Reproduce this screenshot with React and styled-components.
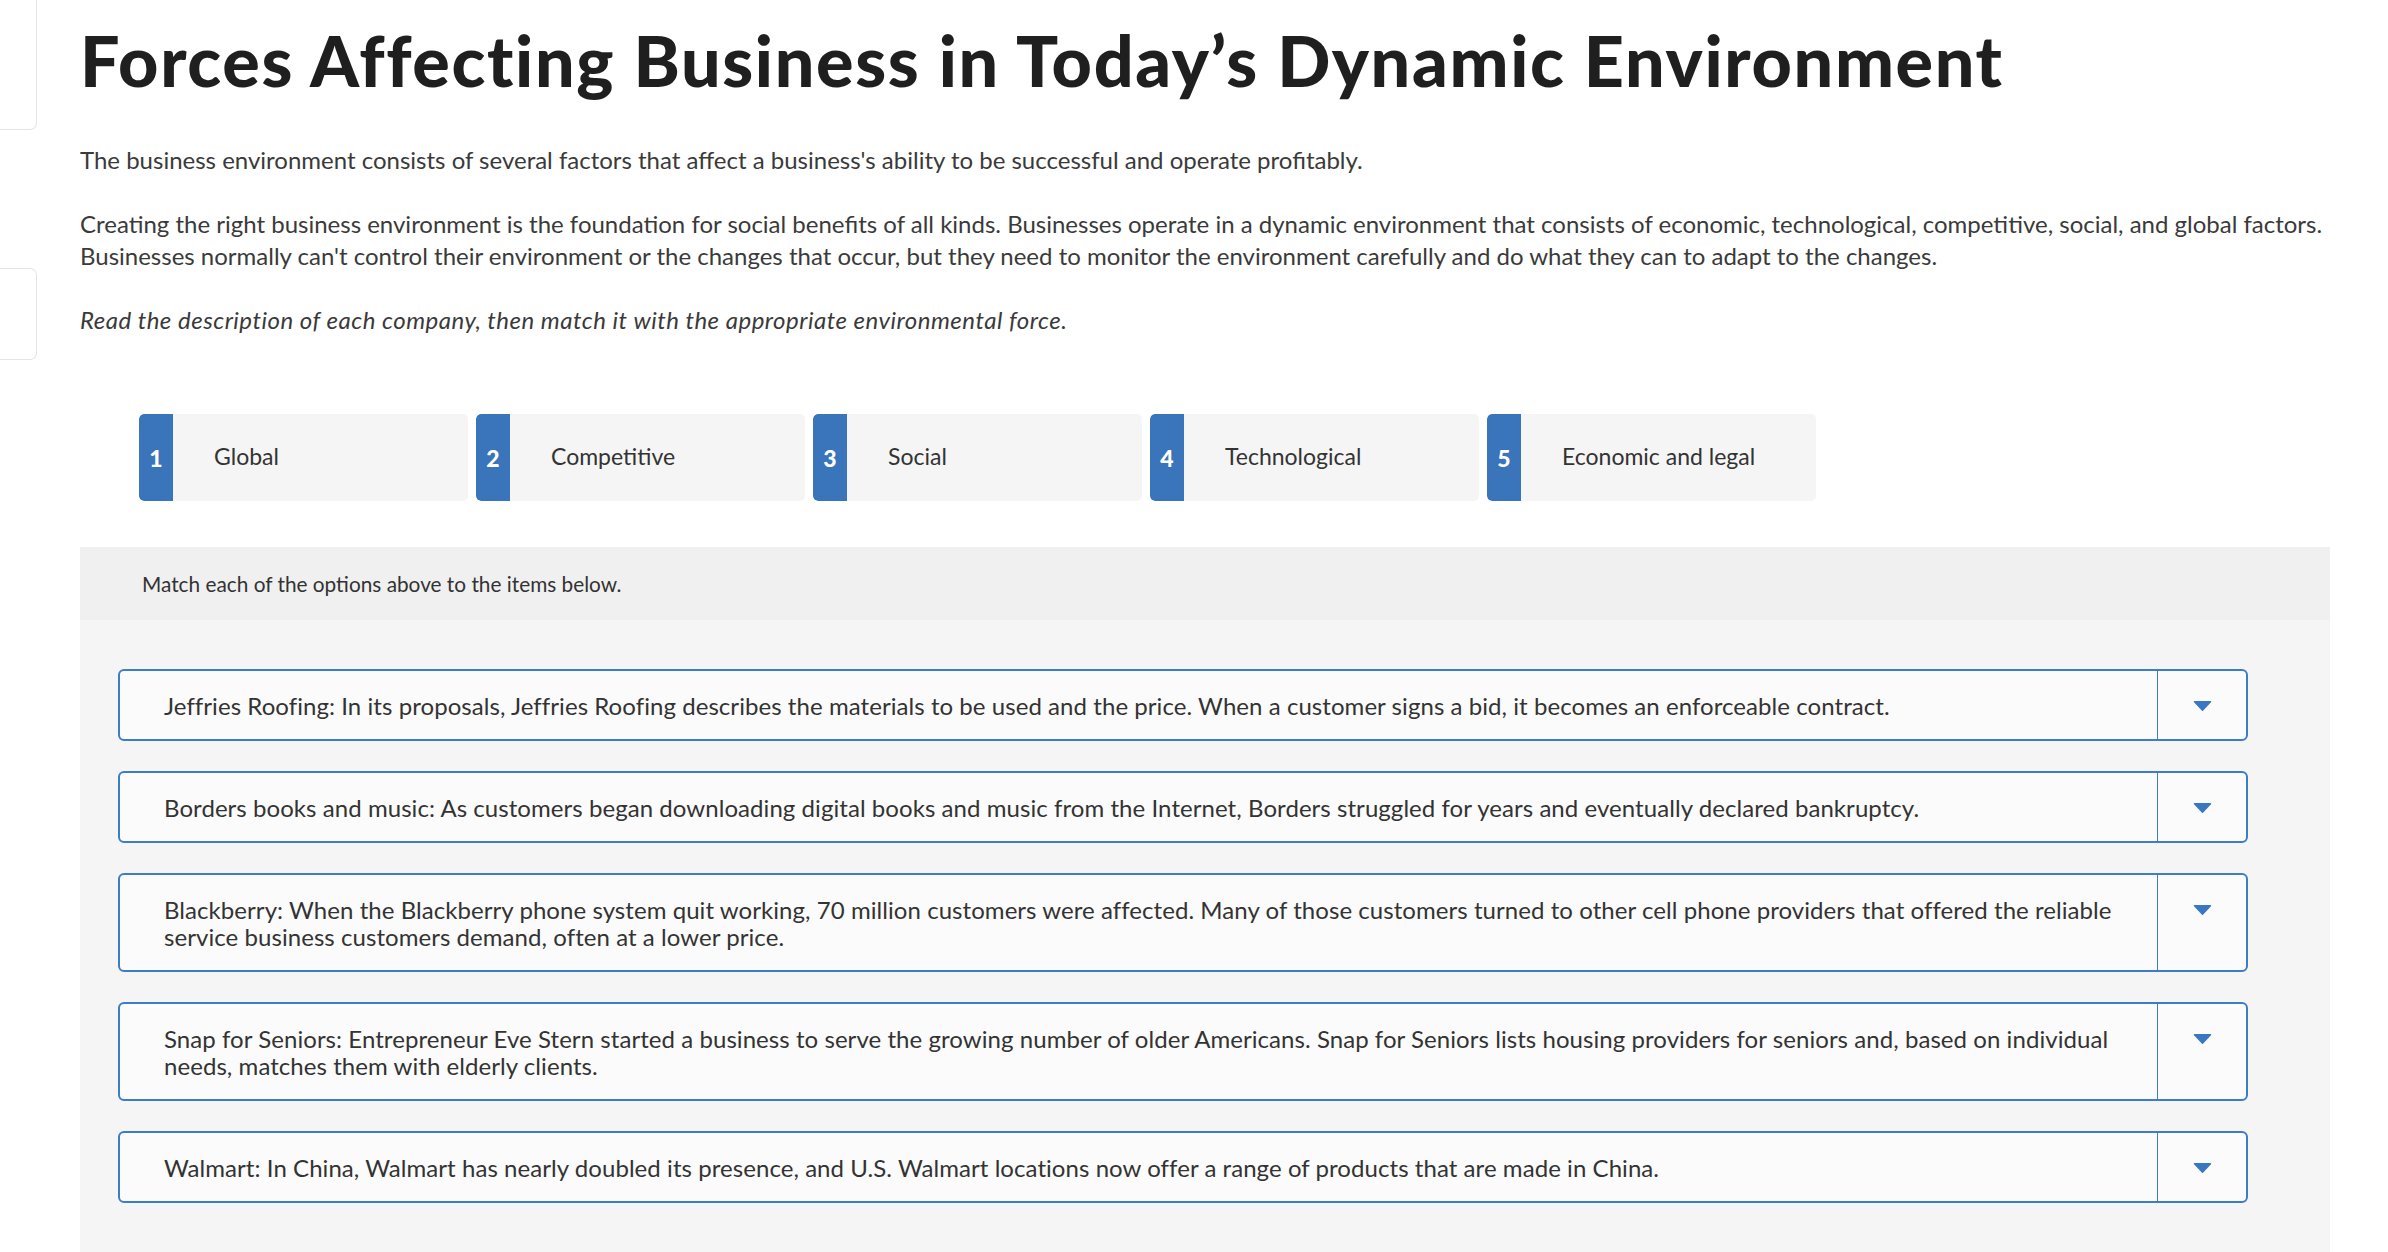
import React from "react";
import styled, { createGlobalStyle } from "styled-components";

const GlobalStyle = createGlobalStyle`
  html, body { margin: 0; padding: 0; background: #ffffff; }
  body { font-family: Lato, "Open Sans", Arial, sans-serif; color: #333; }
  * { box-sizing: border-box; }
`;

const Page = styled.div`
  display: flex;
  width: 2388px;
  height: 1252px;
  overflow: hidden;
  background: #fff;
`;

const Sidebar = styled.aside`
  width: 37px;
  flex-shrink: 0;
  display: flex;
  flex-direction: column;
`;

const SideCard = styled.div`
  width: 37px;
  height: ${(p) => p.$h}px;
  margin-top: ${(p) => p.$mt}px;
  border: 1.5px solid #e4e4e4;
  border-left: none;
  border-radius: 0 7px 7px 0;
  background: #fff;
`;

const Main = styled.main`
  flex: 1;
  display: flex;
  flex-direction: column;
  padding: 21px 58px 0 43px;
`;

const Title = styled.h1`
  margin: 0;
  font-family: Lato, sans-serif;
  font-weight: 900;
  font-size: 70px;
  line-height: 79px;
  color: #1f1f1f;
  letter-spacing: 1.65px;
`;

const Para = styled.p`
  margin: ${(p) => p.$mt}px 0 0 0;
  font-size: 24px;
  line-height: 32px;
  color: #3a3a3a;
  font-style: ${(p) => (p.$italic ? "italic" : "normal")};
  letter-spacing: ${(p) => (p.$italic ? "0.5px" : "0")};
`;

const Options = styled.div`
  display: flex;
  gap: 8px;
  margin: 78px 0 0 59px;
`;

const Chip = styled.div`
  width: 329px;
  height: 87px;
  display: flex;
  align-items: center;
  background: #f5f5f5;
  border-radius: 5px;
  overflow: hidden;
`;

const ChipNum = styled.div`
  width: 34px;
  align-self: stretch;
  display: flex;
  align-items: center;
  justify-content: center;
  background: #3a74ba;
  color: #fff;
  font-weight: 900;
  font-size: 23px;
  border-radius: 5px 0 0 5px;
`;

const ChipLabel = styled.div`
  padding-left: 41px;
  padding-bottom: 3px;
  font-size: 23px;
  color: #333;
`;

const Panel = styled.section`
  margin-top: 46px;
  flex: 1;
  background: #f5f5f5;
  display: flex;
  flex-direction: column;
`;

const PanelHeader = styled.div`
  height: 73px;
  display: flex;
  align-items: center;
  padding-left: 62px;
  background: #f0f0f0;
  font-size: 20.8px;
  color: #333;
`;

const Items = styled.div`
  display: flex;
  flex-direction: column;
  gap: 30px;
  padding: 49px 82px 0 38px;
`;

const Item = styled.div`
  display: flex;
  align-items: stretch;
  background: #fbfbfb;
  border: 2px solid #3d7cc6;
  border-radius: 6px;
`;

const ItemText = styled.div`
  flex: 1;
  padding: 21px 24px 20px 44px;
  font-size: 24px;
  line-height: 27px;
  letter-spacing: 0.06px;
  color: #333;
`;

const DropButton = styled.div`
  width: 89px;
  flex-shrink: 0;
  border-left: 1px solid #3d7cc6;
  display: flex;
  justify-content: center;
  align-items: flex-start;
  padding-top: 30px;
`;

const Caret = () => (
  <svg width="19" height="10" viewBox="0 0 19 10">
    <path d="M1.5 0.8 H17.5 L9.5 9.2 Z" fill="#3a77c2" stroke="#3a77c2" strokeWidth="1.4" strokeLinejoin="round" />
  </svg>
);

const options = ["Global", "Competitive", "Social", "Technological", "Economic and legal"];

const items = [
  "Jeffries Roofing: In its proposals, Jeffries Roofing describes the materials to be used and the price. When a customer signs a bid, it becomes an enforceable contract.",
  "Borders books and music: As customers began downloading digital books and music from the Internet, Borders struggled for years and eventually declared bankruptcy.",
  "Blackberry: When the Blackberry phone system quit working, 70 million customers were affected. Many of those customers turned to other cell phone providers that offered the reliable service business customers demand, often at a lower price.",
  "Snap for Seniors: Entrepreneur Eve Stern started a business to serve the growing number of older Americans. Snap for Seniors lists housing providers for seniors and, based on individual needs, matches them with elderly clients.",
  "Walmart: In China, Walmart has nearly doubled its presence, and U.S. Walmart locations now offer a range of products that are made in China.",
];

export default function App() {
  return (
    <>
      <GlobalStyle />
      <Page>
        <Sidebar>
          <SideCard $mt={-10} $h={140} />
          <SideCard $mt={138} $h={92} />
        </Sidebar>
        <Main>
          <Title>Forces Affecting Business in Today’s Dynamic Environment</Title>
          <Para $mt={44}>
            The business environment consists of several factors that affect a business's ability to be successful and operate profitably.
          </Para>
          <Para $mt={32}>
            Creating the right business environment is the foundation for social benefits of all kinds. Businesses operate in a dynamic environment that consists of economic, technological, competitive, social, and global factors. Businesses normally can't control their environment or the changes that occur, but they need to monitor the environment carefully and do what they can to adapt to the changes.
          </Para>
          <Para $mt={32} $italic>
            Read the description of each company, then match it with the appropriate environmental force.
          </Para>
          <Options>
            {options.map((o, i) => (
              <Chip key={o}>
                <ChipNum>{i + 1}</ChipNum>
                <ChipLabel>{o}</ChipLabel>
              </Chip>
            ))}
          </Options>
          <Panel>
            <PanelHeader>Match each of the options above to the items below.</PanelHeader>
            <Items>
              {items.map((t) => (
                <Item key={t}>
                  <ItemText>{t}</ItemText>
                  <DropButton>
                    <Caret />
                  </DropButton>
                </Item>
              ))}
            </Items>
          </Panel>
        </Main>
      </Page>
    </>
  );
}
